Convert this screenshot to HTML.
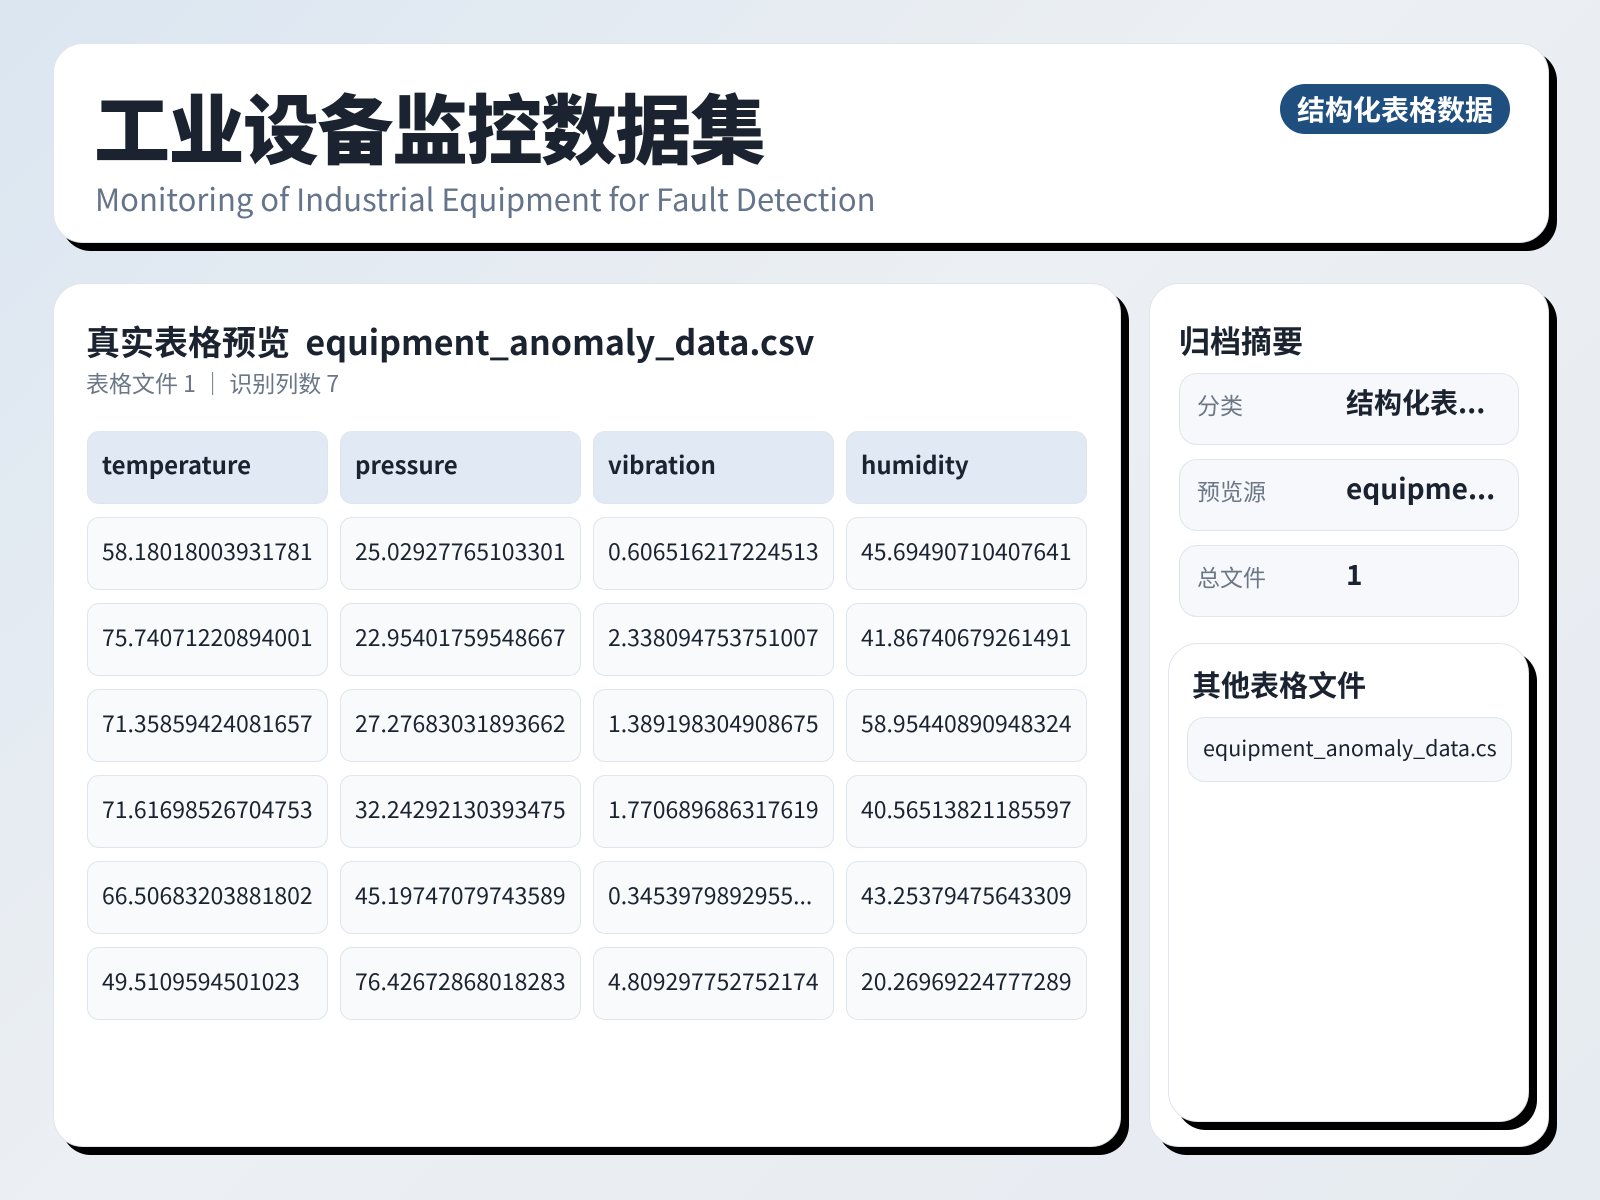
<!DOCTYPE html>
<html><head><meta charset="utf-8"><style>
*{box-sizing:border-box;margin:0;padding:0}
body{width:1600px;height:1200px;overflow:hidden;background:linear-gradient(135deg,#dbe6f1 0%,#eceff3 45%,#e6ebf1 100%);font-family:"Liberation Sans","Noto Sans CJK SC",sans-serif;color:#1b2330;position:relative}
.card{position:absolute;background:#fff;border-radius:30px;border:1px solid #dfe5ec;box-shadow:8px 8px 0 #000}
.title{position:absolute;left:40px;top:43px;font-size:76px;font-weight:900;letter-spacing:-1.5px;line-height:1;font-family:"Noto Sans CJK SC",sans-serif;color:#1b2330}
.sub{position:absolute;left:41px;top:135px;font-size:31px;color:#64748b;font-family:"Noto Sans CJK SC",sans-serif;line-height:1.2}
.badge{position:absolute;left:1226px;top:40px;width:230px;height:50px;border-radius:25px;background:#1f4f7f;color:#fff;font-size:28px;font-weight:700;text-align:center;line-height:50px;font-family:"Noto Sans CJK SC",sans-serif}
.h2{position:absolute;font-weight:700;font-family:"Noto Sans CJK SC",sans-serif;line-height:1;white-space:nowrap}
.cell{position:absolute;width:241px;height:73px;border-radius:12px;border:1px solid #dfe5ec;background:#f8fafc;font-size:23px;padding-left:14px;line-height:64px;font-family:"Noto Sans CJK SC",sans-serif;white-space:nowrap;overflow:hidden;color:#1b2330}
.hd{background:#e1e9f4;font-weight:700;font-size:24px}
.item{position:absolute;left:29px;width:340px;height:72px;border-radius:18px;border:1px solid #dfe5ec;background:#f6f8fb;font-family:"Noto Sans CJK SC",sans-serif}
.item .l{position:absolute;left:17px;top:0;line-height:60px;font-size:23px;color:#6b7787}
.item .v{position:absolute;left:166px;top:0;line-height:56px;font-size:28px;font-weight:700;color:#1b2330}
</style></head><body>
<div class="card" style="left:53px;top:43px;width:1496px;height:200px">
<div class="title">工业设备监控数据集</div>
<div class="sub">Monitoring of Industrial Equipment for Fault Detection</div>
<div class="badge">结构化表格数据</div>
</div>
<div class="card" style="left:53px;top:283px;width:1068px;height:864px">
<div class="h2" style="left:32px;top:40px;font-size:34px">真实表格预览&nbsp; equipment_anomaly_data.csv</div>
<div class="h2" style="left:32px;top:87px;font-size:23px;font-weight:400;color:#6b7787">表格文件 1 ｜ 识别列数 7</div>
</div>
<div class="card" style="left:1149px;top:283px;width:400px;height:864px">
<div class="h2" style="left:29px;top:40px;font-size:31px">归档摘要</div>
<div class="item" style="top:89px"><span class="l">分类</span><span class="v">结构化表...</span></div>
<div class="item" style="top:175px"><span class="l">预览源</span><span class="v">equipme...</span></div>
<div class="item" style="top:261px"><span class="l">总文件</span><span class="v">1</span></div>
</div>
<div class="card" style="left:1168px;top:643px;width:361px;height:479px;box-shadow:8px 8px 0 #000">
<div class="h2" style="left:23px;top:26px;font-size:29px">其他表格文件</div>
<div style="position:absolute;left:18px;top:73px;width:325px;height:65px;border-radius:18px;border:1px solid #dfe5ec;background:#f6f8fb;font-size:21.5px;line-height:60px;padding-left:15px;white-space:nowrap;overflow:hidden;font-family:'Noto Sans CJK SC',sans-serif">equipment_anomaly_data.cs</div>
</div>
<div style="position:absolute;left:0;top:0">
<div class="cell hd" style="left:87px;top:431px">temperature</div>
<div class="cell hd" style="left:340px;top:431px">pressure</div>
<div class="cell hd" style="left:593px;top:431px">vibration</div>
<div class="cell hd" style="left:846px;top:431px">humidity</div>

<div class="cell" style="left:87px;top:517px">58.18018003931781</div>
<div class="cell" style="left:340px;top:517px">25.02927765103301</div>
<div class="cell" style="left:593px;top:517px">0.606516217224513</div>
<div class="cell" style="left:846px;top:517px">45.69490710407641</div>

<div class="cell" style="left:87px;top:603px">75.74071220894001</div>
<div class="cell" style="left:340px;top:603px">22.95401759548667</div>
<div class="cell" style="left:593px;top:603px">2.338094753751007</div>
<div class="cell" style="left:846px;top:603px">41.86740679261491</div>

<div class="cell" style="left:87px;top:689px">71.35859424081657</div>
<div class="cell" style="left:340px;top:689px">27.27683031893662</div>
<div class="cell" style="left:593px;top:689px">1.389198304908675</div>
<div class="cell" style="left:846px;top:689px">58.95440890948324</div>

<div class="cell" style="left:87px;top:775px">71.61698526704753</div>
<div class="cell" style="left:340px;top:775px">32.24292130393475</div>
<div class="cell" style="left:593px;top:775px">1.770689686317619</div>
<div class="cell" style="left:846px;top:775px">40.56513821185597</div>

<div class="cell" style="left:87px;top:861px">66.50683203881802</div>
<div class="cell" style="left:340px;top:861px">45.19747079743589</div>
<div class="cell" style="left:593px;top:861px">0.3453979892955...</div>
<div class="cell" style="left:846px;top:861px">43.25379475643309</div>

<div class="cell" style="left:87px;top:947px">49.5109594501023</div>
<div class="cell" style="left:340px;top:947px">76.42672868018283</div>
<div class="cell" style="left:593px;top:947px">4.809297752752174</div>
<div class="cell" style="left:846px;top:947px">20.26969224777289</div>
</div>
</body></html>
